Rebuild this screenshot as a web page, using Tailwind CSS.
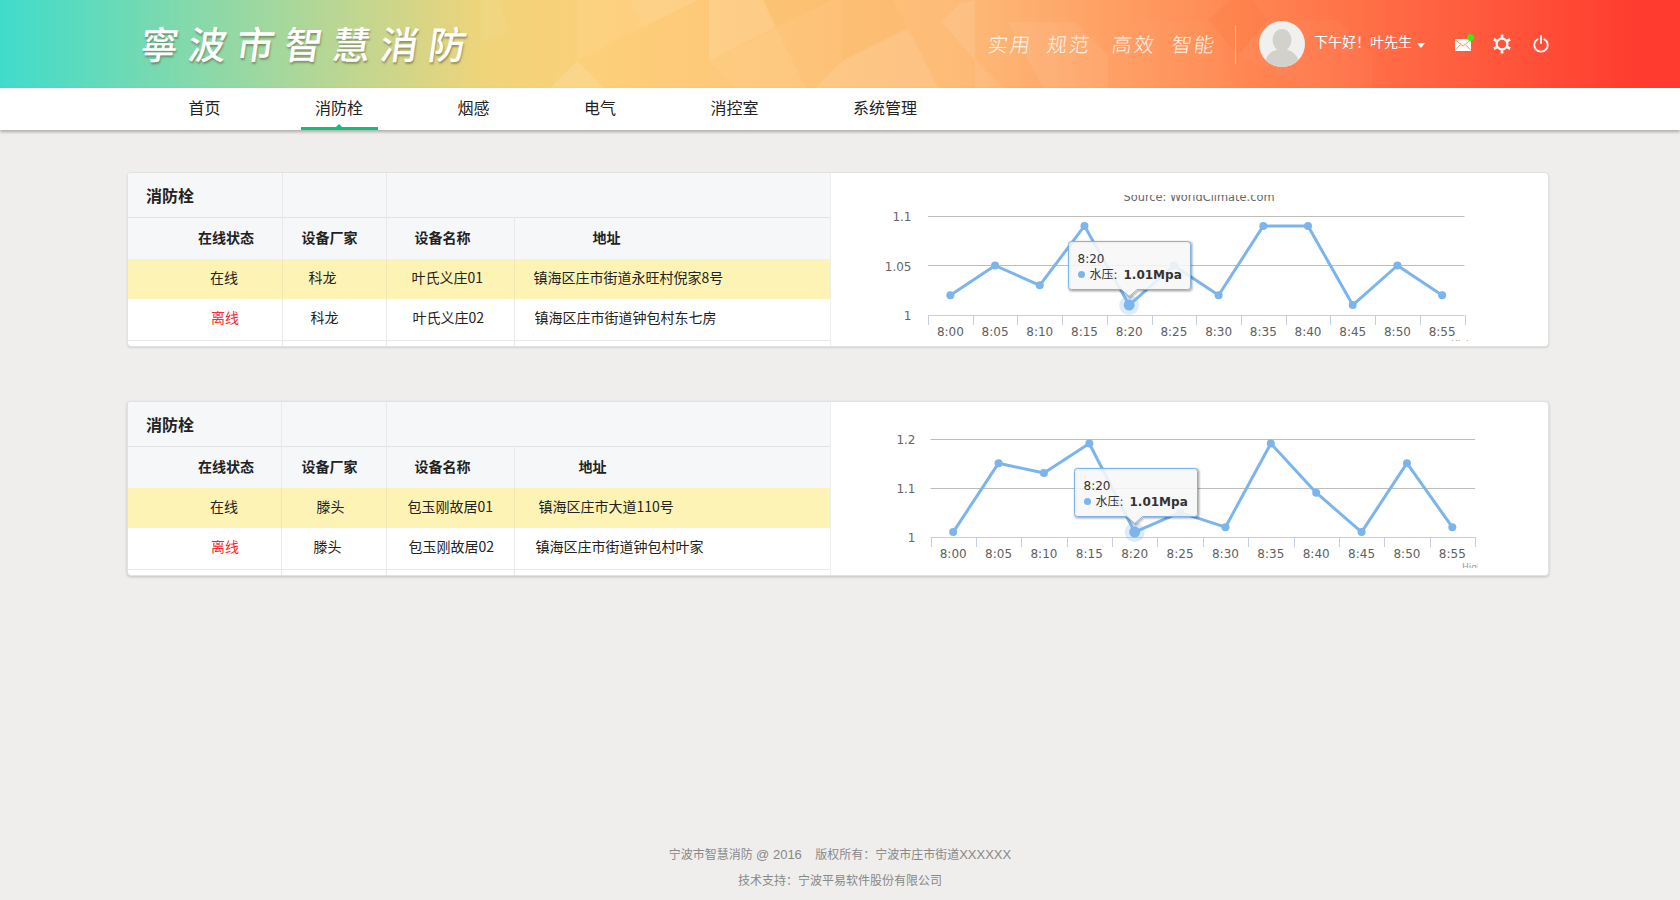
<!DOCTYPE html>
<html lang="zh-CN">
<head>
  <meta charset="UTF-8" />
  <title>宁波市智慧消防</title>
  <script src="https://cdn.jsdelivr.net/npm/@tailwindcss/browser@4"></script>
</head>
<body class="bg-[#efeeec] h-[900px] overflow-hidden flex flex-col font-['Noto_Sans_CJK_SC','Noto_Sans',sans-serif] text-[#222]">

  <!-- header -->
  <header class="relative h-[88px] shrink-0 flex items-center text-white bg-[linear-gradient(90deg,#3fdccb_0%,#f0d47a_29%,#fdcf7a_36%,#fdbb78_57%,#ff8a54_73%,#ff3a2e_98%)]">
    <svg class="absolute inset-0" width="1680" height="88" fill="#fff">
      <polygon points="480,0 497,0 510,32 480,42" opacity=".05"/>
      <polygon points="550,88 577,61 604,88" opacity=".12"/>
      <polygon points="577,0 630,0 643,27 577,61" opacity=".05"/>
      <polygon points="630,0 698,0 643,27" opacity=".11"/>
      <polygon points="709,0 763,0 776,27 709,61" opacity=".11"/>
      <polygon points="709,61 776,28 806,88 737,88" opacity=".06"/>
      <polygon points="842,61 908,28 938,88 815,88" opacity=".09"/>
      <polygon points="763,0 833,0 776,27" fill="#f0a030" opacity=".08"/>
      <polygon points="842,0 893,0 908,28 842,61" fill="#f0a030" opacity=".08"/>
      <polygon points="942,22 960,3 975,0 975,60" opacity=".09"/>
      <polygon points="975,60 1003,88 975,88" opacity=".07"/>
      <polygon points="1008,22 1075,22 1108,55 1108,88 1043,88" opacity=".07"/>
      <polygon points="1108,55 1140,22 1208,22 1238,88 1108,88" opacity=".02"/>
      <polygon points="1208,20 1230,0 1252,0 1268,20 1238,55" fill="#e8641a" opacity=".1"/>
      <polygon points="1238,55 1268,20 1337,20 1372,55 1372,88 1303,88" opacity=".03"/>
    </svg>

    <h1 class="relative pl-[141px] mt-[-3px] text-[38px] leading-none font-medium tracking-[10px] whitespace-nowrap skew-x-[-8deg] [text-shadow:1px_2px_2px_rgba(90,90,60,.55)]">寧波市智慧消防</h1>

    <div class="relative ml-auto pr-[131px] flex items-center">
      <div class="flex items-center text-[20px] tracking-[2px] font-light skew-x-[-8deg] text-white/90 whitespace-nowrap">
        <span class="w-[43px]">实用</span>
        <span class="w-[43px] ml-[16px]">规范</span>
        <span class="w-[43px] ml-[22px]">高效</span>
        <span class="w-[43px] ml-[17px]">智能</span>
      </div>
      <div class="w-px h-[39px] bg-white/50 ml-[20px] mr-[23px]"></div>
      <svg width="46" height="46" viewBox="0 0 46 46">
        <defs><clipPath id="avatarClip"><circle cx="23" cy="23" r="23"/></clipPath></defs>
        <circle cx="23" cy="23" r="23" fill="#f0f0ee"/>
        <g clip-path="url(#avatarClip)" fill="#d2d1cc">
          <ellipse cx="23" cy="19" rx="9.500" ry="11"/>
          <ellipse cx="23" cy="44" rx="17.500" ry="16"/>
        </g>
      </svg>
      <span class="ml-[9px] text-[14px] leading-none mt-[-6px] whitespace-nowrap">下午好<span class="font-['Noto_Sans_CJK_TC']">！</span>叶先生</span>
      <span class="ml-[5px] mt-[2px] w-0 h-0 border-x-[4px] border-x-transparent border-t-[5px] border-t-white"></span>
      <div class="relative ml-[30px] mt-[2px] w-[16px] h-[12px]">
        <svg width="16" height="12" viewBox="0 0 16 12">
          <rect width="16" height="12" fill="#fff"/>
          <path d="M0 .5 8 7l8-6.500M0 11.500 5.500 5.500M16 11.500 10.500 5.500" fill="none" stroke="#f08a6a" stroke-width=".9"/>
        </svg>
        <span class="absolute right-[-3px] top-[-5px] w-[7px] h-[7px] rounded-full bg-[#3fe80f]"></span>
      </div>
      <svg class="ml-[22px]" width="18" height="20" viewBox="-10 -11 20 22" fill="none" stroke="#fff">
        <circle r="6" stroke-width="2.400"/>
        <path d="M0-10.500V-7M0 7v3.500M-9-5.250-6-3.500M6 3.500 9 5.250M-9 5.250-6 3.500M6-3.500 9-5.250" stroke-width="3"/>
      </svg>
      <svg class="ml-[22px] mt-[-1px]" width="16" height="18" viewBox="0 0 16 18" fill="none" stroke="#fff" stroke-width="1.800" stroke-linecap="round">
        <path d="M8 1v7"/>
        <path d="M4.600 4.200a6.700 6.700 0 1 0 6.800 0"/>
      </svg>
    </div>
  </header>

  <!-- nav -->
  <nav class="h-[42px] shrink-0 bg-white flex pl-[174px] gap-[65.500px] text-[16px] text-[#222] shadow-[0_2px_3px_rgba(0,0,0,.28)] relative">
    <a class="px-[14.500px] leading-[38px]">首页</a>
    <a class="relative px-[14.500px] leading-[38px] border-b-[3px] border-[#0bc27c]">消防栓
      <span class="absolute left-1/2 -translate-x-1/2 bottom-0 w-0 h-0 border-x-[3px] border-x-transparent border-b-[3px] border-b-[#0bc27c]"></span>
    </a>
    <a class="px-[14.500px] leading-[38px]">烟感</a>
    <a class="px-[14.500px] leading-[38px]">电气</a>
    <a class="px-[14.500px] leading-[38px]">消控室</a>
    <a class="px-[14.500px] leading-[38px]">系统管理</a>
  </nav>

  <main class="pt-[42px] pl-[127px] w-[1549px] flex flex-col gap-[54px]">

    <section class="h-[175px] bg-white border border-[#e2e2e0] rounded-[4px] shadow-[0_1px_2px_rgba(0,0,0,.12)] flex overflow-hidden">
      <table class="w-[702px] shrink-0 table-fixed border-collapse text-[14px] text-left self-start">
        <colgroup><col class="w-[154px]" /><col class="w-[104px]" /><col class="w-[128px]" /><col /></colgroup>
        <tr class="h-[44px] bg-[#f6f7f9] border-b border-[#e2e3e5]">
          <th class="pl-[18px] text-[16px] font-bold border-r border-[#e9e9e9]">消防栓</th>
          <th class="border-r border-[#e9e9e9]"></th>
          <th colspan="2"></th>
        </tr>
        <tr class="h-[42px] bg-[#f6f7f9] font-bold">
          <th class="pb-[2px] pl-[70px] border-r border-[#e9e9e9]">在线状态</th>
          <th class="pb-[2px] pl-[19px] border-r border-[#e9e9e9]">设备厂家</th>
          <th class="pb-[2px] pl-[28px] border-r border-[#e9e9e9]">设备名称</th>
          <th class="pb-[2px] pl-[78px]">地址</th>
        </tr>
        <tr class="h-[40px] bg-[#fdf3b4]">
          <td class="pb-[4px] pl-[82px] border-r border-[#f0e8b4]">在线</td>
          <td class="pb-[4px] pl-[26px] border-r border-[#f0e8b4]">科龙</td>
          <td class="pb-[4px] pl-[25px] border-r border-[#f0e8b4]">叶氏义庄01</td>
          <td class="pb-[4px] pl-[19px]">镇海区庄市街道永旺村倪家8号</td>
        </tr>
        <tr class="h-[41px] border-b border-[#e9e9e9]">
          <td class="pb-[4px] pl-[83px] text-[#fb2a2a] border-r border-[#e9e9e9]">离线</td>
          <td class="pb-[4px] pl-[28px] border-r border-[#e9e9e9]">科龙</td>
          <td class="pb-[4px] pl-[26px] border-r border-[#e9e9e9]">叶氏义庄02</td>
          <td class="pb-[4px] pl-[20px]">镇海区庄市街道钟包村东七房</td>
        </tr>
        <tr class="h-[6px]">
          <td class="border-r border-[#e9e9e9]"></td>
          <td class="border-r border-[#e9e9e9]"></td>
          <td class="border-r border-[#e9e9e9]"></td>
          <td></td>
        </tr>
      </table>
      <div class="flex-1 border-l border-[#eee] pt-[22px]" id="chart1"></div>
    </section>

    <section class="h-[175px] bg-white border border-[#e2e2e0] rounded-[4px] shadow-[0_1px_3px_rgba(0,0,0,.2)] flex overflow-hidden">
      <table class="w-[702px] shrink-0 table-fixed border-collapse text-[14px] text-left self-start">
        <colgroup><col class="w-[153px]" /><col class="w-[105px]" /><col class="w-[128px]" /><col /></colgroup>
        <tr class="h-[44px] bg-[#f6f7f9] border-b border-[#e2e3e5]">
          <th class="pl-[18px] text-[16px] font-bold border-r border-[#e9e9e9]">消防栓</th>
          <th class="border-r border-[#e9e9e9]"></th>
          <th colspan="2"></th>
        </tr>
        <tr class="h-[42px] bg-[#f6f7f9] font-bold">
          <th class="pb-[2px] pl-[70px] border-r border-[#e9e9e9]">在线状态</th>
          <th class="pb-[2px] pl-[20px] border-r border-[#e9e9e9]">设备厂家</th>
          <th class="pb-[2px] pl-[28px] border-r border-[#e9e9e9]">设备名称</th>
          <th class="pb-[2px] pl-[64px]">地址</th>
        </tr>
        <tr class="h-[40px] bg-[#fdf3b4]">
          <td class="pb-[4px] pl-[82px] border-r border-[#f0e8b4]">在线</td>
          <td class="pb-[4px] pl-[35px] border-r border-[#f0e8b4]">滕头</td>
          <td class="pb-[4px] pl-[21px] border-r border-[#f0e8b4]">包玉刚故居01</td>
          <td class="pb-[4px] pl-[24px]">镇海区庄市大道110号</td>
        </tr>
        <tr class="h-[41px] border-b border-[#e9e9e9]">
          <td class="pb-[4px] pl-[83px] text-[#fb2a2a] border-r border-[#e9e9e9]">离线</td>
          <td class="pb-[4px] pl-[32px] border-r border-[#e9e9e9]">滕头</td>
          <td class="pb-[4px] pl-[22px] border-r border-[#e9e9e9]">包玉刚故居02</td>
          <td class="pb-[4px] pl-[21px]">镇海区庄市街道钟包村叶家</td>
        </tr>
        <tr class="h-[6px]">
          <td class="border-r border-[#e9e9e9]"></td>
          <td class="border-r border-[#e9e9e9]"></td>
          <td class="border-r border-[#e9e9e9]"></td>
          <td></td>
        </tr>
      </table>
      <div class="flex-1 border-l border-[#eee] pt-[8px]" id="chart2"></div>
    </section>
  </main>

  <footer class="mt-auto pb-[6px] text-center text-[12px] leading-[26px] text-[#888] font-['Liberation_Sans','Noto_Sans_CJK_SC',sans-serif]">
    <p class="whitespace-pre">宁波市智慧消防 <span class="text-[13px]">@ 2016</span>    版权所有：宁波市庄市街道<span class="text-[13px]">XXXXXX</span></p>
    <p>技术支持：宁波平易软件股份有限公司</p>
  </footer>

  <script>
    const times = ["8:00","8:05","8:10","8:15","8:20","8:25","8:30","8:35","8:40","8:45","8:50","8:55"];
    const labelFont = "DejaVu Sans, sans-serif";

    // hand-rolled line chart, all numbers in page coordinates
    function drawChart(id, c) {
      const left = 831;
      const step = (c.x1 - c.x0) / 12;
      const px = i => c.x0 + step * (i + 0.5);
      const py = v => c.yAxis - (v - 1) * c.pxPerUnit;
      let s = `<svg width="${c.clipRight - left}" height="${c.vh}" viewBox="${left} ${c.vy} ${c.clipRight - left} ${c.vh}" font-family="${labelFont}" font-size="12">`;

      c.grid.forEach(g => {
        if (g.v !== 1) s += `<line x1="${c.x0}" x2="${c.x1}" y1="${Math.round(py(g.v)) + 0.5}" y2="${Math.round(py(g.v)) + 0.5}" stroke="#bdbdbd"/>`;
        s += `<text x="${c.labelX}" y="${py(g.v) + 5}" text-anchor="end" fill="#666">${g.label}</text>`;
      });
      s += `<line x1="${c.x0}" x2="${c.x1}" y1="${c.yAxis + 0.5}" y2="${c.yAxis + 0.5}" stroke="#c0d0e0"/>`;
      for (let i = 0; i <= 12; i++) {
        const x = Math.round(c.x0 + step * i) + 0.5;
        s += `<line x1="${x}" x2="${x}" y1="${c.yAxis}" y2="${c.yAxis + 10}" stroke="#c0d0e0"/>`;
      }
      times.forEach((t, i) => {
        s += `<text x="${px(i)}" y="${c.yAxis + 21}" text-anchor="middle" fill="#606060">${t}</text>`;
      });
      if (c.source) s += `<text x="1199" y="201" text-anchor="middle" font-size="11.400" fill="#666">Source: WorldClimate.com</text>`;
      s += `<text x="${c.creditX}" y="${c.creditY}" font-size="9" fill="#999">Highcharts.com</text>`;

      const pts = c.data.map((v, i) => `${px(i)},${py(v)}`).join(" ");
      s += `<polyline points="${pts}" fill="none" stroke="#7cb5ec" stroke-width="3" stroke-linejoin="round"/>`;
      c.data.forEach((v, i) => { s += `<circle cx="${px(i)}" cy="${py(v)}" r="4" fill="#7cb5ec"/>`; });
      s += `<circle cx="${px(4)}" cy="${py(c.data[4])}" r="10" fill="#7cb5ec" opacity=".25"/>`;
      s += `<circle cx="${px(4)}" cy="${py(c.data[4])}" r="5.500" fill="#7cb5ec"/>`;

      // tooltip
      const t = c.tip, ax = px(4);
      const d = `M${t.x + 3} ${t.y}H${t.x + t.w - 3}Q${t.x + t.w} ${t.y} ${t.x + t.w} ${t.y + 3}V${t.y + t.h - 3}Q${t.x + t.w} ${t.y + t.h} ${t.x + t.w - 3} ${t.y + t.h}H${ax + 8}L${ax} ${t.y + t.h + 7}L${ax - 8} ${t.y + t.h}H${t.x + 3}Q${t.x} ${t.y + t.h} ${t.x} ${t.y + t.h - 3}V${t.y + 3}Q${t.x} ${t.y} ${t.x + 3} ${t.y}Z`;
      [5, 3, 1].forEach((w, i) => {
        s += `<path d="${d}" fill="none" stroke="#000" stroke-opacity="${[0.05, 0.1, 0.15][i]}" stroke-width="${w}" transform="translate(1 1)"/>`;
      });
      s += `<path d="${d}" fill="#f7f7f7" fill-opacity=".88" stroke="#7cb5ec"/>`;
      s += `<text x="${t.x + 9}" y="${t.y + 21}" fill="#333">8:20</text>`;
      s += `<circle cx="${t.x + 13}" cy="${t.y + 33}" r="3.500" fill="#7cb5ec"/>`;
      s += `<text x="${t.x + 21}" y="${t.y + 37}" fill="#333"><tspan font-family="Noto Sans CJK SC" font-size="12">水压</tspan>:</text>`;
      s += `<text x="${t.x + 55}" y="${t.y + 37}" fill="#333" font-weight="bold">1.01Mpa</text>`;
      s += `</svg>`;
      document.getElementById(id).innerHTML = s;
    }

    drawChart("chart1", {
      x0: 928, x1: 1464.500, yAxis: 315, pxPerUnit: 990, labelX: 911.500,
      vy: 195, vh: 146, clipRight: 1472, source: true, creditX: 1451, creditY: 347,
      grid: [{ v: 1.1, label: "1.1" }, { v: 1.05, label: "1.05" }, { v: 1, label: "1" }],
      data: [1.02, 1.05, 1.03, 1.09, 1.01, 1.05, 1.02, 1.09, 1.09, 1.01, 1.05, 1.02],
      tip: { x: 1068.500, y: 241.500, w: 122, h: 48 },
    });
    drawChart("chart2", {
      x0: 930.500, x1: 1475, yAxis: 537, pxPerUnit: 492, labelX: 915.500,
      vy: 410, vh: 158, clipRight: 1478, source: false, creditX: 1462, creditY: 570,
      grid: [{ v: 1.2, label: "1.2" }, { v: 1.1, label: "1.1" }, { v: 1, label: "1" }],
      data: [1.01, 1.15, 1.13, 1.19, 1.01, 1.05, 1.02, 1.19, 1.09, 1.01, 1.15, 1.02],
      tip: { x: 1074.500, y: 468.500, w: 123, h: 48 },
    });
  </script>
</body>
</html>
